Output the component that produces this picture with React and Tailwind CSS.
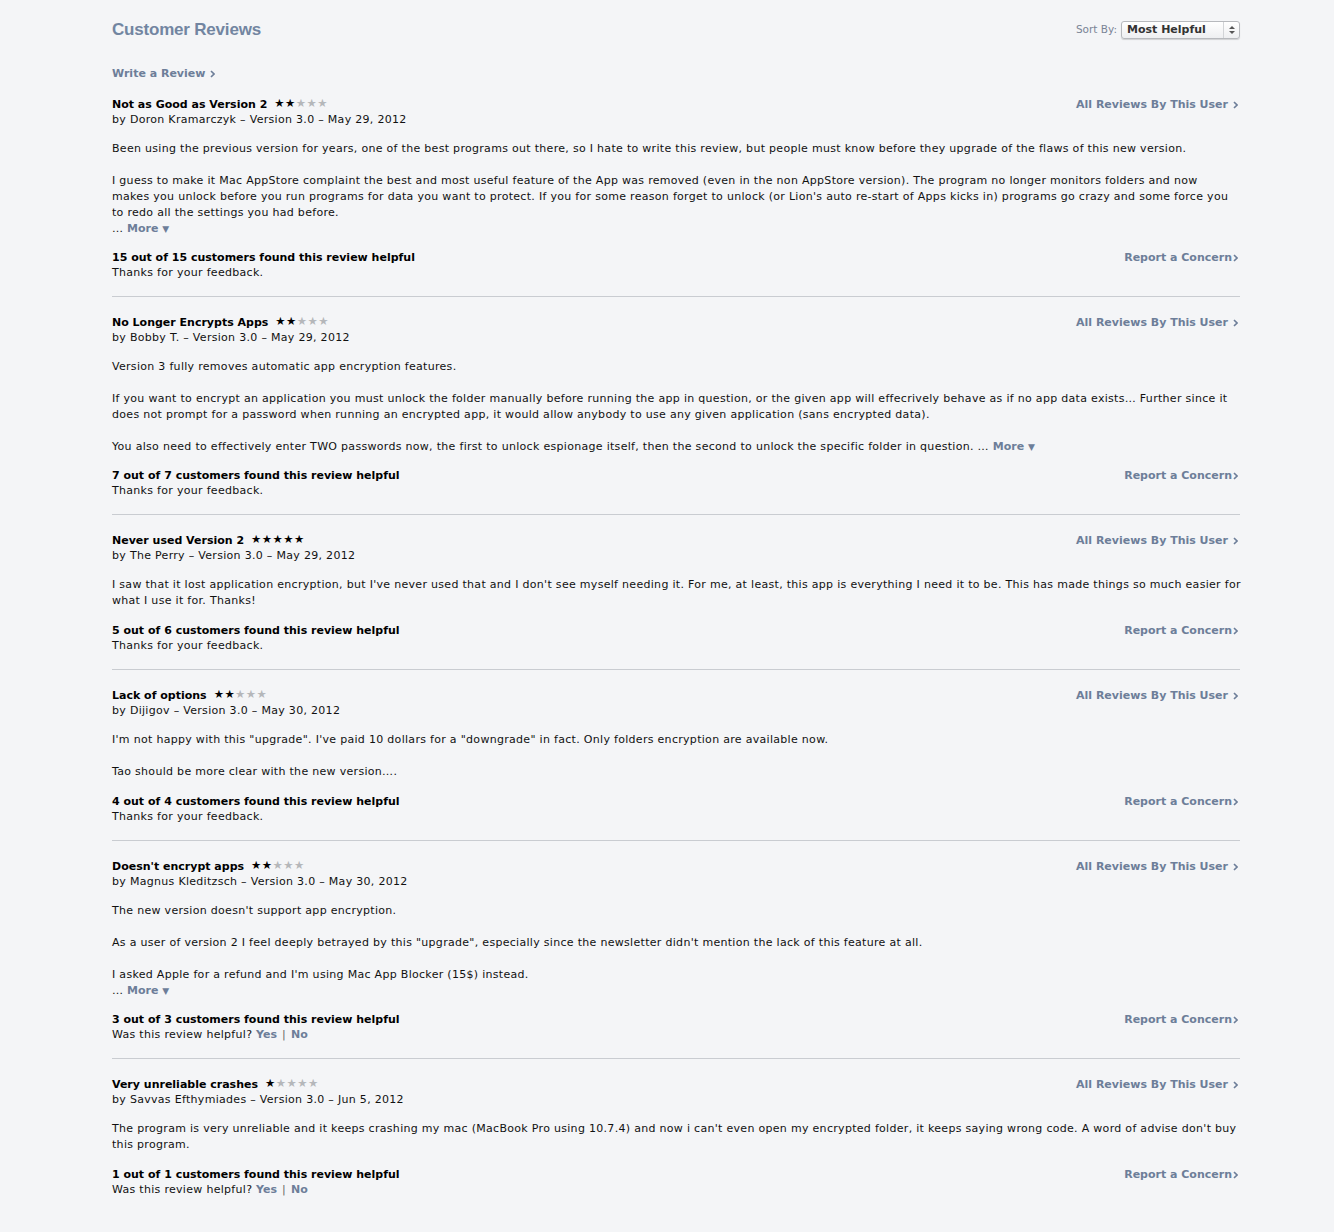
const reviews = [
  {
    title: "Not as Good as Version 2",
    stars: 2,
    by: "Doron Kramarczyk",
    date: "May 29, 2012",
    body: [
      "Been using the previous version for years, one of the best programs out there, so I hate to write this review, but people must know before they upgrade of the flaws of this new version.",
      "I guess to make it Mac AppStore complaint the best and most useful feature of the App was removed (even in the non AppStore version). The program no longer monitors folders and now\nmakes you unlock before you run programs for data you want to protect. If you for some reason forget to unlock (or Lion's auto re-start of Apps kicks in) programs go crazy and some force you\nto redo all the settings you had before.",
    ],
    more: "block",
    helpful: "15 out of 15",
    voted: true,
  },
  {
    title: "No Longer Encrypts Apps",
    stars: 2,
    by: "Bobby T.",
    date: "May 29, 2012",
    body: [
      "Version 3 fully removes automatic app encryption features.",
      "If you want to encrypt an application you must unlock the folder manually before running the app in question, or the given app will effecrively behave as if no app data exists… Further since it\ndoes not prompt for a password when running an encrypted app, it would allow anybody to use any given application (sans encrypted data).",
      "You also need to effectively enter TWO passwords now, the first to unlock espionage itself, then the second to unlock the specific folder in question.",
    ],
    more: "inline",
    helpful: "7 out of 7",
    voted: true,
  },
  {
    title: "Never used Version 2",
    stars: 5,
    by: "The Perry",
    date: "May 29, 2012",
    body: [
      "I saw that it lost application encryption, but I've never used that and I don't see myself needing it. For me, at least, this app is everything I need it to be. This has made things so much easier for\nwhat I use it for. Thanks!",
    ],
    helpful: "5 out of 6",
    voted: true,
  },
  {
    title: "Lack of options",
    stars: 2,
    by: "Dijigov",
    date: "May 30, 2012",
    body: [
      "I'm not happy with this \"upgrade\". I've paid 10 dollars for a \"downgrade\" in fact. Only folders encryption are available now.",
      "Tao should be more clear with the new version….",
    ],
    helpful: "4 out of 4",
    voted: true,
  },
  {
    title: "Doesn't encrypt apps",
    stars: 2,
    by: "Magnus Kleditzsch",
    date: "May 30, 2012",
    body: [
      "The new version doesn't support app encryption.",
      "As a user of version 2 I feel deeply betrayed by this \"upgrade\", especially since the newsletter didn't mention the lack of this feature at all.",
      "I asked Apple for a refund and I'm using Mac App Blocker (15$) instead.",
    ],
    more: "block",
    helpful: "3 out of 3",
    voted: false,
  },
  {
    title: "Very unreliable crashes",
    stars: 1,
    by: "Savvas Efthymiades",
    date: "Jun 5, 2012",
    body: [
      "The program is very unreliable and it keeps crashing my mac (MacBook Pro using 10.7.4) and now i can't even open my encrypted folder, it keeps saying wrong code. A word of advise don't buy\nthis program.",
    ],
    helpful: "1 out of 1",
    voted: false,
  },
];

const Stars = ({ count }) => (
  <span className="ml-[7px] text-[11.5px] tracking-[0.4px] leading-none -translate-y-[1px]">
    {[0, 1, 2, 3, 4].map((i) => (
      <span key={i} className={i < count ? "text-black" : "text-[#b5b7ba]"}>
        ★
      </span>
    ))}
  </span>
);

const More = () => (
  <span>
    …{" "}
    <span className="font-bold tracking-normal text-[#6d7e99]">
      More <span className="text-[9px]">▼</span>
    </span>
  </span>
);

const Chevron = ({ className = "" }) => (
  <svg width="5" height="8" viewBox="0 0 5 8" className={className}>
    <path d="M1 1 L4 4 L1 7" fill="none" stroke="#6d7e99" strokeWidth="1.6" />
  </svg>
);

const Review = ({ review, last }) => (
  <div className={`pt-[18px] pb-[16px] ${last ? "" : "border-b border-[#c9ccd1]"}`}>
    <div className="flex items-center justify-between leading-[15px]">
      <div className="flex items-center">
        <span className="font-bold text-black">{review.title}</span>
        <Stars count={review.stars} />
      </div>
      <a className="mr-[2px] font-bold text-[#6d7e99] flex items-center">
        All Reviews By This User
        <Chevron className="ml-[5px]" />
      </a>
    </div>
    <div className="leading-[15px] text-[#111] tracking-[0.3px]">
      by {review.by} – Version 3.0 – {review.date}
    </div>
    <div
      className={`mt-[14px] mr-[-4px] leading-[16px] text-[#111] tracking-[0.3px] whitespace-pre-line flex flex-col gap-[16px] ${
        review.more ? "" : "pb-[1px]"
      }`}
    >
      {review.body.map((p, i) => (
        <p key={i}>
          {p}
          {review.more === "inline" && i === review.body.length - 1 && (
            <>
              {" "}
              <More />
            </>
          )}
        </p>
      ))}
    </div>
    {review.more === "block" && (
      <div className="leading-[16px] text-[#111] tracking-[0.3px]">
        <More />
      </div>
    )}
    <div className="mt-[13px] flex justify-between leading-[15px]">
      <span className="font-bold text-black">
        {review.helpful} customers found this review helpful
      </span>
      <a className="mr-[2px] font-bold text-[#6d7e99] flex items-center">
        Report a Concern
        <Chevron className="ml-[1px]" />
      </a>
    </div>
    <div className="leading-[15px] text-[#111] tracking-[0.3px]">
      {review.voted ? (
        "Thanks for your feedback."
      ) : (
        <>
          Was this review helpful?{" "}
          <span className="font-bold tracking-normal text-[#6d7e99]">Yes</span>
          <span className="text-[#666] mx-[5px]">|</span>
          <span className="font-bold tracking-normal text-[#6d7e99]">No</span>
        </>
      )}
    </div>
  </div>
);

export default function App() {
  return (
    <div
      className="min-h-[1232px] bg-[#f4f5f7] text-[11px]"
      style={{ fontFamily: '"DejaVu Sans", sans-serif' }}
    >
      <div className="w-[1128px] ml-[112px] pt-[18px]">
        <div className="flex items-center justify-between h-[24px]">
          <h1
            className="text-[17px] tracking-[-0.2px] font-bold text-[#7285a1]"
            style={{ fontFamily: '"Liberation Sans", Arial, sans-serif' }}
          >
            Customer Reviews
          </h1>
          <div className="flex items-center">
            <span className="text-[#7a8496] text-[10.5px] mr-[4px]">Sort By:</span>
            <div className="w-[119px] h-[18px] rounded-[3px] border border-[#b7b9bd] bg-gradient-to-b from-white to-[#eeeff1] shadow-[0_1px_1px_rgba(0,0,0,0.15)] flex items-center">
              <span className="flex-1 pl-[5px] font-bold text-[#333]">Most Helpful</span>
              <span className="w-[16px] h-full border-l border-[#d2d4d7] flex items-center justify-center">
                <svg width="6" height="10" viewBox="0 0 6 10">
                  <path d="M0 4 L3 1 L6 4 Z" fill="#555" />
                  <path d="M0 6 L3 9 L6 6 Z" fill="#555" />
                </svg>
              </span>
            </div>
          </div>
        </div>
        <div className="mt-[24px] leading-[15px] font-bold text-[#6d7e99] flex items-center">
          Write a Review
          <Chevron className="ml-[5px]" />
        </div>
        <div className="mt-[-2px]">
          {reviews.map((r, i) => (
            <Review key={i} review={r} last={i === reviews.length - 1} />
          ))}
        </div>
      </div>
    </div>
  );
}
